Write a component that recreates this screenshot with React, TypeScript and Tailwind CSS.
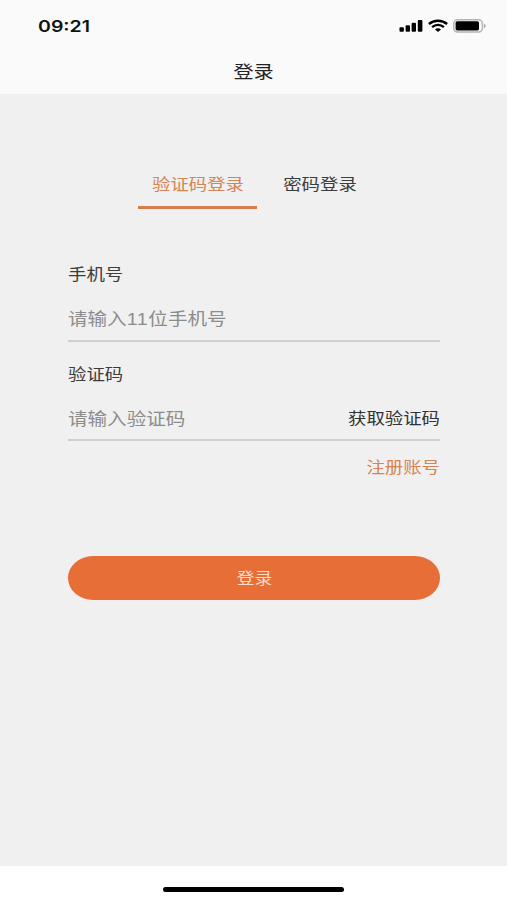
import type { ReactNode } from "react"
import clsx from "clsx"

interface LabelProps {
  children: ReactNode
  className?: string
}

// 横に少し広い字形のテキスト
const Label = ({ children, className }: LabelProps) => (
  <span className={clsx("inline-block scale-x-[1.15] whitespace-nowrap", className)}>{children}</span>
)

const StatusBar = () => (
  <div className="flex h-[52px] items-center justify-between pr-[20px] pl-[38px]">
    <span className="inline-block origin-left scale-x-[1.22] font-['Inter',sans-serif] text-[16px] leading-none font-semibold text-[#111]">
      09:21
    </span>
    <div className="flex items-center text-black">
      <svg className="h-[14px] w-[24px]" viewBox="0 0 24 14" fill="currentColor">
        <rect x="0.5" y="8.2" width="4.4" height="4.6" rx="1" />
        <rect x="6.6" y="6.2" width="4.4" height="6.6" rx="1" />
        <rect x="12.6" y="3.8" width="4.4" height="9" rx="1" />
        <rect x="18.8" y="0.9" width="4.6" height="11.9" rx="1" />
      </svg>
      <svg className="ml-[5px] h-[14px] w-[20px]" viewBox="0 0 20 14" fill="none" stroke="currentColor">
        <path d="M0.9 5C6 0.7 14 0.7 19.1 5" strokeWidth="2.5" />
        <path d="M4.1 8.2C7.5 5.2 12.5 5.2 15.9 8.2" strokeWidth="2.3" />
        <path d="M7 10.4C8.8 8.9 11.2 8.9 13 10.4L10 12.9Z" fill="currentColor" stroke="none" />
      </svg>
      <svg className="ml-[5px] h-[14px] w-[34px]" viewBox="0 0 34 14">
        <rect x="0.8" y="0.8" width="28.6" height="12.2" rx="3.8" fill="none" stroke="#b4b4b4" strokeWidth="1.5" />
        <rect x="2.6" y="2.2" width="23.4" height="9.2" rx="1.6" fill="currentColor" />
        <path d="M31 5c2 .6 2 3.4 0 4z" fill="#a0a0a0" />
      </svg>
    </div>
  </div>
)

const App = () => {
  return (
    <div className="flex h-[900px] w-full flex-col overflow-hidden bg-[#f0f0f0] font-['Noto_Sans_CJK_SC',sans-serif] text-[#3c3c3c]">
      <header className="h-[94px] shrink-0 bg-[#fafafa]">
        <StatusBar />
        <h1 className="flex h-[37px] items-center justify-center text-[17.5px] leading-none text-[#222]">
          <Label>登录</Label>
        </h1>
      </header>

      <main className="flex-1 pt-[71px] pr-[67px] pl-[68px]">
        {/* タブ */}
        <nav className="ml-[70px] flex gap-[3px] text-[16px] leading-none">
          <button className="flex h-[44px] w-[119px] justify-center border-b-[3px] border-[#d87d50] pt-[10px] pl-px text-[#d58454]">
            <Label>验证码登录</Label>
          </button>
          <button className="flex h-[44px] w-[119px] justify-center pt-[10px] pl-px">
            <Label>密码登录</Label>
          </button>
        </nav>

        <div className="mt-[56px] h-[77px] border-b-2 border-[#d0d0d0]">
          <div className="text-[16px] leading-none">
            <Label className="origin-left">手机号</Label>
          </div>
          <div className="mt-[28px] text-[17px] leading-none text-[#8c8c8c]">
            <Label className="origin-left">
              请输入<span className="font-['Liberation_Sans',sans-serif] tracking-[0.6px]">11</span>位手机号
            </Label>
          </div>
        </div>

        <div className="mt-[23px] h-[76px] border-b-2 border-[#d0d0d0]">
          <div className="text-[16px] leading-none">
            <Label className="origin-left">验证码</Label>
          </div>
          <div className="mt-[28px] flex items-start justify-between text-[17px] leading-none text-[#8c8c8c]">
            <Label className="origin-left">请输入验证码</Label>
            <Label className="origin-right text-[16px] text-[#333]">获取验证码</Label>
          </div>
        </div>

        <div className="mt-[17px] text-right text-[16px] leading-none text-[#d58454]">
          <Label className="origin-right">注册账号</Label>
        </div>

        <button className="mt-[82px] flex h-[44px] w-full items-center justify-center rounded-[25px/22px] bg-[#e86e37] pl-px text-[15.5px] leading-none text-[#f9dcc8]">
          <Label>登录</Label>
        </button>
      </main>

      <footer className="flex h-[34px] shrink-0 justify-center bg-white pt-[21px]">
        <div className="h-[5px] w-[181px] rounded-full bg-black" />
      </footer>
    </div>
  )
}

export default App
